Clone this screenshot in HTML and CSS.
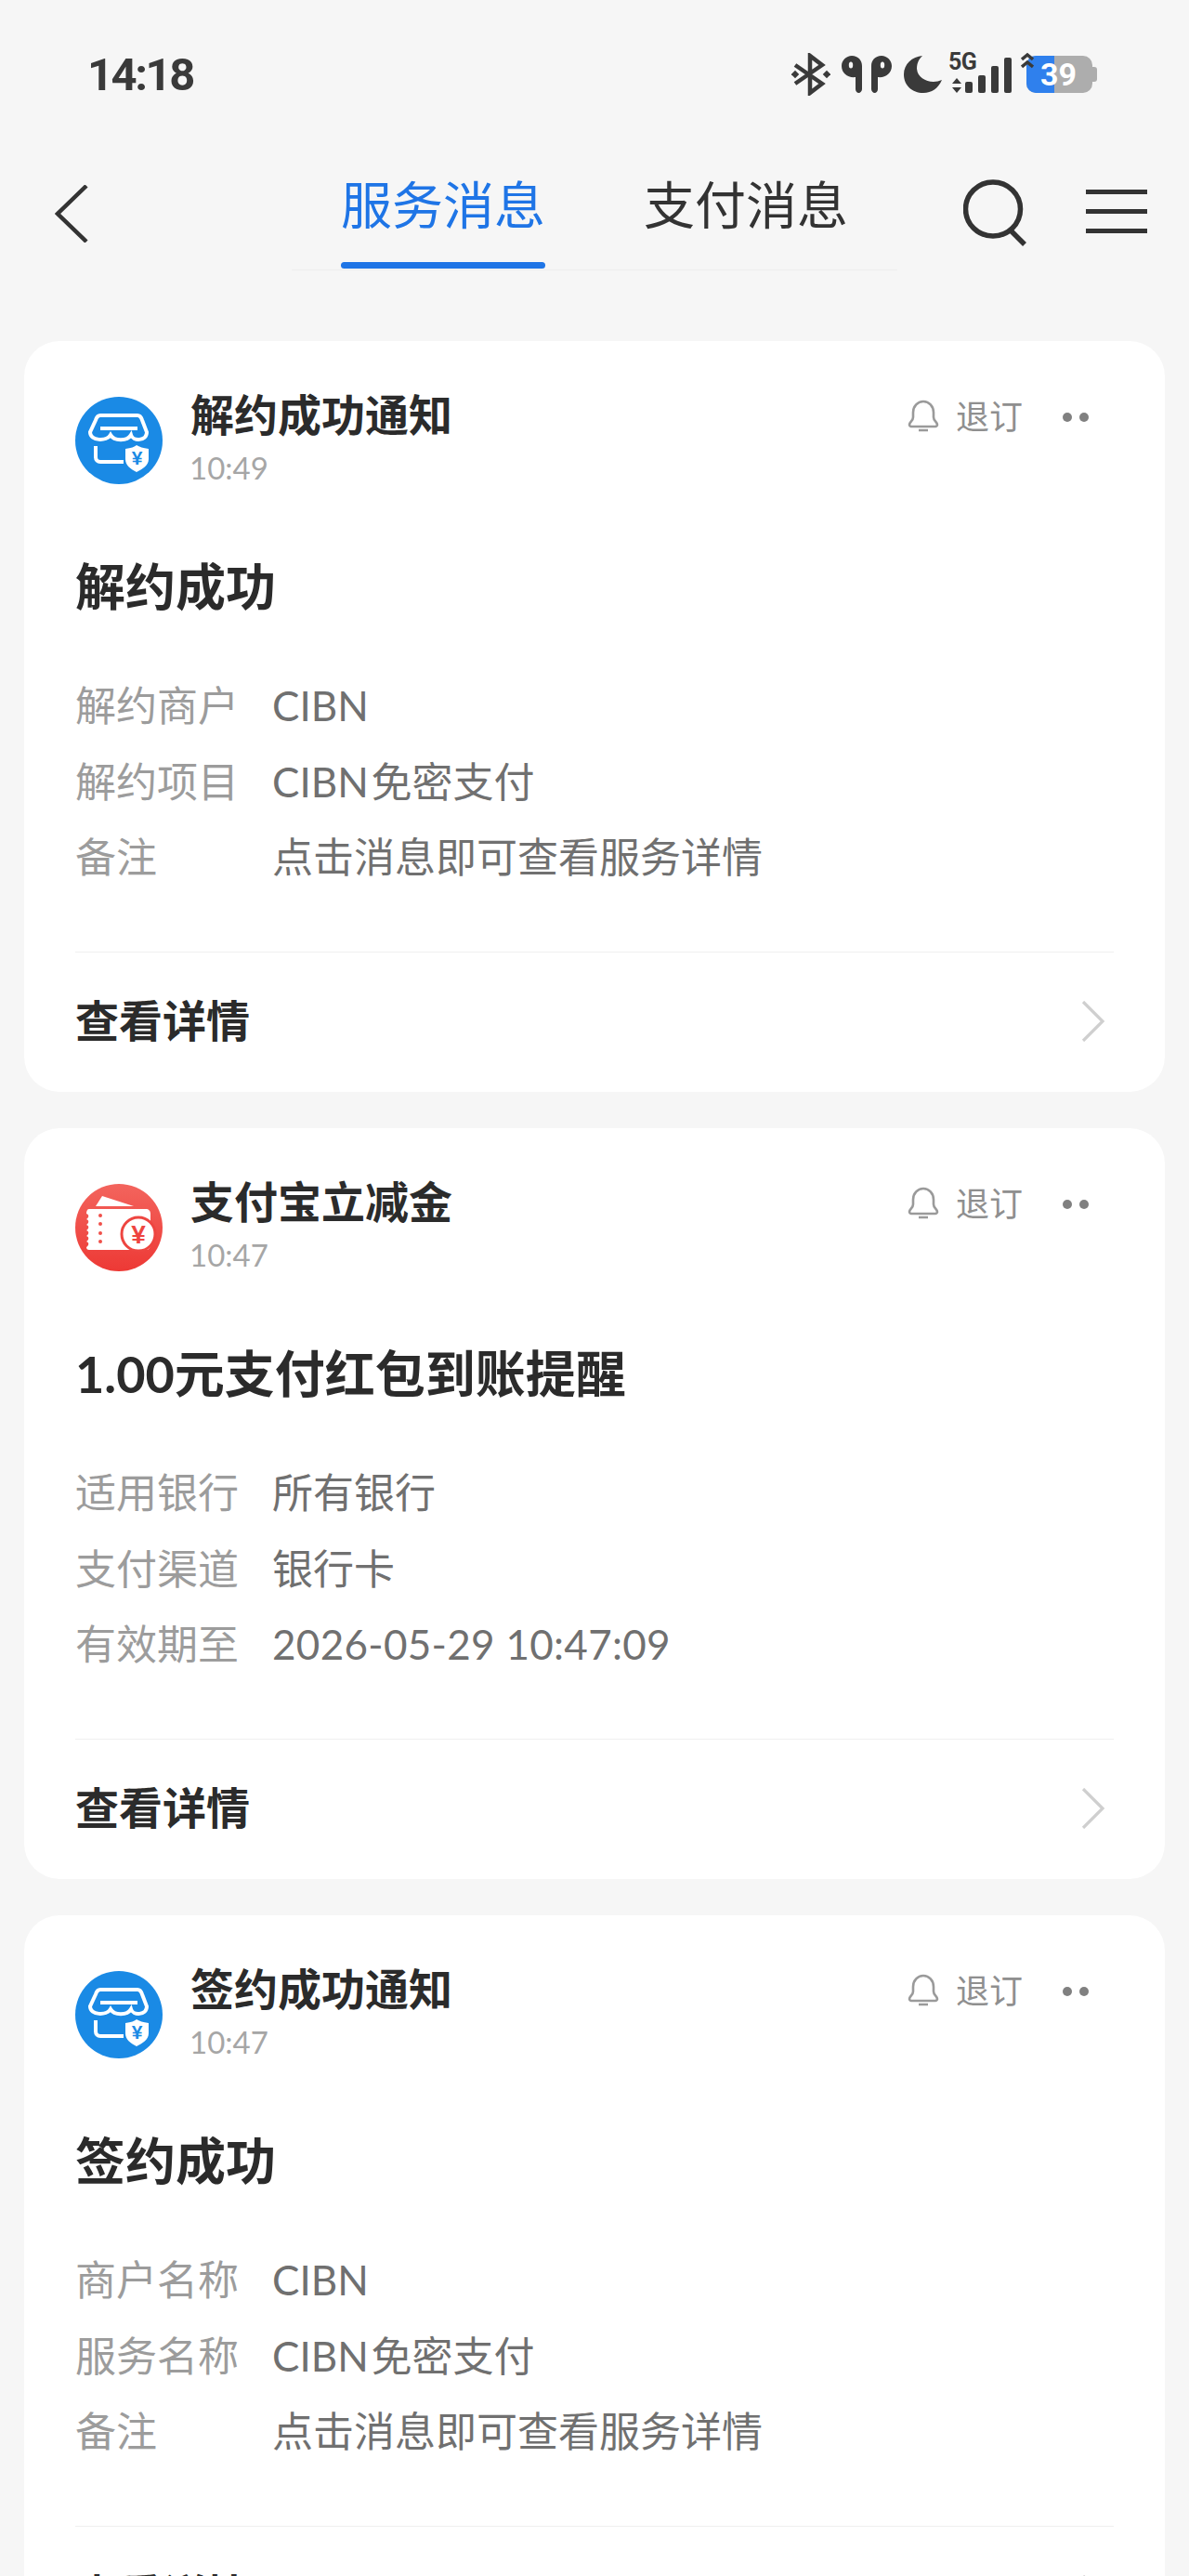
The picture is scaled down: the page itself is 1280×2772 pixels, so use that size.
FILE: index.html
```html
<!DOCTYPE html>
<html lang="zh-CN">
<head>
    <meta charset="UTF-8">
    <meta name="viewport" content="width=device-width, initial-scale=1.0">
    <title>服务消息</title>
    <link rel="stylesheet" href="styles.css">
</head>
<body>

<div class="status-bar">
    <span class="clock">14:18</span>
    <div class="status-icons">
        <svg class="ic-bt" width="42" height="46" viewBox="0 0 42 46">
            <path d="M4 13 L33 33 L20 43 V3 L33 13 L4 33" fill="none" stroke="#3a3a3a" stroke-width="4.5"/>
            <rect x="-3" y="-3" width="6" height="6" transform="translate(4 23) rotate(45)" fill="#3a3a3a"/>
            <rect x="-3" y="-3" width="6" height="6" transform="translate(38 23) rotate(45)" fill="#3a3a3a"/>
        </svg>
        <svg class="ic-pods" width="54" height="40" viewBox="0 0 54 40">
            <path d="M11 0 C18 0 22 5 22 11 V36 C22 38 20 40 18.500 40 C16.500 40 15 38 15 36 V23 C7 24 0 19 0 11 C0 5 5 0 11 0 Z" fill="#3a3a3a"/>
            <ellipse cx="10" cy="10" rx="2.200" ry="3.500" fill="#f6f6f6"/>
            <path d="M43 0 C36 0 32 5 32 11 V36 C32 38 34 40 35.500 40 C37.500 40 39 38 39 36 V23 C47 24 54 19 54 11 C54 5 49 0 43 0 Z" fill="#3a3a3a"/>
            <ellipse cx="44" cy="10" rx="2.200" ry="3.500" fill="#f6f6f6"/>
        </svg>
        <svg class="ic-moon" width="41" height="40" viewBox="0 0 41 40">
            <path d="M20 0 C9 1 0 9 0 20 C0 32 9 40 21 40 C30 40 37 35 41 26 C30 31 15 26 14 14 C14 8 16 4 20 0 Z" fill="#3a3a3a"/>
        </svg>
        <div class="net">
            <div class="net-left">
                <span class="net-5g">5G</span>
                <svg width="10" height="16" viewBox="0 0 10 16"><path d="M5 0 L10 6 H0 Z M5 16 L0 10 H10 Z" fill="#3a3a3a"/></svg>
            </div>
            <div class="bars">
                <i class="bar bar-1"></i><i class="bar bar-2"></i><i class="bar bar-3"></i><i class="bar bar-4"></i>
            </div>
        </div>
        <div class="battery">
            <div class="battery-body"><div class="battery-fill"></div><span class="battery-num">39</span></div>
            <div class="battery-tip"></div>
            <svg class="charge" width="14" height="20" viewBox="0 0 14 20"><path d="M1 8 L7 3 L13 8 M1 16 L7 11 L13 16" fill="none" stroke="#3a3a3a" stroke-width="3.5"/></svg>
        </div>
    </div>
</div>

<div class="nav">
    <svg class="back" width="36" height="62" viewBox="0 0 36 62"><path d="M34 1 L3 31 L34 61" fill="none" stroke="#333" stroke-width="4.5"/></svg>
    <div class="tabs">
        <div class="tab active">服务消息<div class="tab-line"></div></div>
        <div class="tab">支付消息</div>
    </div>
    <svg class="search" width="68" height="72" viewBox="0 0 68 72"><ellipse cx="32" cy="32" rx="29.5" ry="29" fill="none" stroke="#333" stroke-width="5.5"/><path d="M51 55 L66 70" fill="none" stroke="#333" stroke-width="5.5"/></svg>
    <div class="menu"><i></i><i></i><i></i></div>
</div>

<div class="list">

    <div class="card">
        <div class="card-head">
            <svg class="logo" width="94" height="94" viewBox="0 0 94 94">
                <circle cx="47" cy="47" r="47" fill="#1a8ae5"/>
                <path d="M27 20 H67 C70 20 71 22 72 25 L77 38 C77 48 62 48 60 41 C56 48 42 48 38 41 C34 48 16 48 16 38 L22 25 C23 22 24 20 27 20 Z M27 34 H67" fill="none" stroke="#fff" stroke-width="4"/>
                <path d="M22 53 V65 C22 68 24 70 27 70 H52" fill="none" stroke="#fff" stroke-width="4"/>
                <path d="M54 56 C60 55 64 54 66 52 C69 54 73 55 79 56 V67 C79 74 72 78 66 81 C60 78 54 74 54 67 Z" fill="#fff"/>
                <text class="logo-yen" x="66.5" y="73" text-anchor="middle">¥</text>
            </svg>
            <div class="head-text">
                <div class="card-title">解约成功通知</div>
                <div class="card-time">10:49</div>
            </div>
            <div class="card-actions">
                <svg class="bell" width="36" height="36" viewBox="0 0 36 36"><path d="M3 27 C3 24 7 23 7 19 V14 C7 7 12 2 18 2 C24 2 29 7 29 14 V19 C29 23 33 24 33 27 C33 28 32 29 31 29 H5 C4 29 3 28 3 27 Z M13 33 H23" fill="none" stroke="#9a9a9a" stroke-width="2.6"/></svg>
                <span class="unsub">退订</span>
                <div class="dots"><i></i><i></i></div>
            </div>
        </div>
        <div class="card-heading">解约成功</div>
        <div class="rows">
            <div class="row"><span class="row-label">解约商户</span><span class="row-value">CIBN</span></div>
            <div class="row"><span class="row-label">解约项目</span><span class="row-value">CIBN&#8202;免密支付</span></div>
            <div class="row"><span class="row-label">备注</span><span class="row-value">点击消息即可查看服务详情</span></div>
        </div>
        <div class="card-foot">
            <span class="foot-text">查看详情</span>
            <svg class="foot-arrow" width="26" height="44" viewBox="0 0 26 44"><path d="M2 1 L23 22 L2 43" fill="none" stroke="#cfcfcf" stroke-width="3.2"/></svg>
        </div>
    </div>

    <div class="card">
        <div class="card-head">
            <svg class="logo" width="94" height="94" viewBox="0 0 94 94">
                <defs><linearGradient id="redFill" x1="0" y1="0" x2="0" y2="1"><stop offset="0" stop-color="#f3645d"/><stop offset="1" stop-color="#ed3935"/></linearGradient></defs>
                <circle cx="47" cy="47" r="47" fill="url(#redFill)"/>
                <path d="M22 24 L29 13 L63 24 Z" fill="#fff"/>
                <path d="M15 27 H76 C79 27 81 29 81 32 V66 C81 69 79 71 76 71 H15 C13 71 12 70 12 68 C15 66 15 63 12 62 C15 60 15 57 12 56 C15 54 15 51 12 50 C15 48 15 45 12 44 C15 42 15 39 12 38 C15 36 15 33 12 32 C12 29 13 27 15 27 Z" fill="#fff"/>
                <circle cx="27" cy="34" r="2" fill="#f0504a"/><circle cx="27" cy="43" r="2" fill="#f0504a"/><circle cx="27" cy="53" r="2" fill="#f0504a"/><circle cx="27" cy="62" r="2" fill="#f0504a"/>
                <circle cx="68" cy="54" r="18" fill="#fff" stroke="#ee4540" stroke-width="3"/>
                <text class="logo-yen logo-yen-red" x="68" y="64" text-anchor="middle">¥</text>
            </svg>
            <div class="head-text">
                <div class="card-title">支付宝立减金</div>
                <div class="card-time">10:47</div>
            </div>
            <div class="card-actions">
                <svg class="bell" width="36" height="36" viewBox="0 0 36 36"><path d="M3 27 C3 24 7 23 7 19 V14 C7 7 12 2 18 2 C24 2 29 7 29 14 V19 C29 23 33 24 33 27 C33 28 32 29 31 29 H5 C4 29 3 28 3 27 Z M13 33 H23" fill="none" stroke="#9a9a9a" stroke-width="2.6"/></svg>
                <span class="unsub">退订</span>
                <div class="dots"><i></i><i></i></div>
            </div>
        </div>
        <div class="card-heading">1.00元支付红包到账提醒</div>
        <div class="rows">
            <div class="row"><span class="row-label">适用银行</span><span class="row-value">所有银行</span></div>
            <div class="row"><span class="row-label">支付渠道</span><span class="row-value">银行卡</span></div>
            <div class="row"><span class="row-label">有效期至</span><span class="row-value row-date">2026-05-29 10:47:09</span></div>
        </div>
        <div class="card-foot">
            <span class="foot-text">查看详情</span>
            <svg class="foot-arrow" width="26" height="44" viewBox="0 0 26 44"><path d="M2 1 L23 22 L2 43" fill="none" stroke="#cfcfcf" stroke-width="3.2"/></svg>
        </div>
    </div>

    <div class="card">
        <div class="card-head">
            <svg class="logo" width="94" height="94" viewBox="0 0 94 94">
                <circle cx="47" cy="47" r="47" fill="#1a8ae5"/>
                <path d="M27 20 H67 C70 20 71 22 72 25 L77 38 C77 48 62 48 60 41 C56 48 42 48 38 41 C34 48 16 48 16 38 L22 25 C23 22 24 20 27 20 Z M27 34 H67" fill="none" stroke="#fff" stroke-width="4"/>
                <path d="M22 53 V65 C22 68 24 70 27 70 H52" fill="none" stroke="#fff" stroke-width="4"/>
                <path d="M54 56 C60 55 64 54 66 52 C69 54 73 55 79 56 V67 C79 74 72 78 66 81 C60 78 54 74 54 67 Z" fill="#fff"/>
                <text class="logo-yen" x="66.5" y="73" text-anchor="middle">¥</text>
            </svg>
            <div class="head-text">
                <div class="card-title">签约成功通知</div>
                <div class="card-time">10:47</div>
            </div>
            <div class="card-actions">
                <svg class="bell" width="36" height="36" viewBox="0 0 36 36"><path d="M3 27 C3 24 7 23 7 19 V14 C7 7 12 2 18 2 C24 2 29 7 29 14 V19 C29 23 33 24 33 27 C33 28 32 29 31 29 H5 C4 29 3 28 3 27 Z M13 33 H23" fill="none" stroke="#9a9a9a" stroke-width="2.6"/></svg>
                <span class="unsub">退订</span>
                <div class="dots"><i></i><i></i></div>
            </div>
        </div>
        <div class="card-heading">签约成功</div>
        <div class="rows">
            <div class="row"><span class="row-label">商户名称</span><span class="row-value">CIBN</span></div>
            <div class="row"><span class="row-label">服务名称</span><span class="row-value">CIBN&#8202;免密支付</span></div>
            <div class="row"><span class="row-label">备注</span><span class="row-value">点击消息即可查看服务详情</span></div>
        </div>
        <div class="card-foot">
            <span class="foot-text">查看详情</span>
            <svg class="foot-arrow" width="26" height="44" viewBox="0 0 26 44"><path d="M2 1 L23 22 L2 43" fill="none" stroke="#cfcfcf" stroke-width="3.2"/></svg>
        </div>
    </div>

</div>

</body>
</html>
```

FILE: styles.css
```css
html, body {
    height: 2772px;
    overflow: hidden;
}

body {
    margin: 0;
    background-color: #f6f6f6;
    color: #2b2b2b;
    font-family: Lato, "Noto Sans CJK SC", sans-serif;
}

/* Status bar */
.status-bar {
    display: flex;
    align-items: center;
    height: 160px;
    padding: 0 98px 0 94px;
    box-sizing: border-box;
}

.clock {
    font-family: Roboto, sans-serif;
    font-size: 49px;
    font-weight: 700;
    letter-spacing: -2.5px;
    color: #3a3a3a;
}

.status-icons {
    display: flex;
    align-items: flex-start;
    margin-left: auto;
    height: 46px;
}

.ic-pods {
    margin: 3px 0 0 12px;
}

.ic-moon {
    margin: 3px 0 0 13px;
}

.net {
    display: flex;
    align-items: flex-end;
    width: 68px;
    height: 43px;
    margin-left: 7px;
}

.net-left {
    display: flex;
    flex-direction: column;
    width: 32px;
    flex: none;
}

.net-5g {
    font-family: Roboto, sans-serif;
    font-size: 25px;
    font-weight: 700;
    line-height: 20px;
    color: #3a3a3a;
    letter-spacing: -0.5px;
}

.net-left svg {
    margin: 7px 0 0 4px;
}

.bars {
    display: flex;
    align-items: flex-end;
    gap: 6px;
    margin-left: -14px;
}

.bar {
    width: 8px;
    flex: none;
    background: #3a3a3a;
    border-radius: 2px;
}

.bar-1 { height: 12px; }
.bar-2 { height: 19px; }
.bar-3 { height: 29px; }
.bar-4 { height: 38px; }

.battery {
    position: relative;
    display: flex;
    align-items: center;
    width: 83px;
    height: 40px;
    margin: 3px 0 0 10px;
    padding-left: 6px;
    box-sizing: border-box;
}

.charge {
    position: absolute;
    left: 0;
    top: -4px;
}

.battery-body {
    position: relative;
    width: 71px;
    height: 40px;
    border-radius: 10px;
    background: #adadad;
    overflow: hidden;
}

.battery-fill {
    width: 30px;
    height: 40px;
    background: #2f80ed;
}

.battery-num {
    position: absolute;
    left: 15px;
    top: 0;
    font-family: Roboto, sans-serif;
    font-size: 34px;
    font-weight: 700;
    line-height: 40px;
    color: #fff;
}

.battery-tip {
    width: 5px;
    height: 16px;
    background: #adadad;
    border-radius: 0 3px 3px 0;
}

/* Nav */
.nav {
    display: flex;
    align-items: flex-start;
    padding-left: 59px;
    height: 131px;
}

.back {
    margin-top: 39px;
}

.tabs {
    display: flex;
    gap: 106px;
    box-sizing: border-box;
    width: 652px;
    height: 131px;
    margin-left: 219px;
    padding: 22px 0 0 53px;
    border-bottom: 1px solid #eeeeee;
}

.tab {
    width: 220px;
    height: 108px;
    font-size: 55px;
    line-height: 76px;
    text-align: center;
    color: #333;
}

.tab.active {
    color: #1f75e6;
}

.tab-line {
    height: 7px;
    margin-top: 24px;
    border-radius: 4px;
    background: #1f75e6;
}

.search {
    margin: 33px 0 0 71px;
}

.menu {
    display: flex;
    flex-direction: column;
    gap: 16px;
    width: 66px;
    margin: 44px 0 0 64px;
}

.menu i {
    display: block;
    height: 5px;
    background: #333;
}

/* Cards */
.list {
    display: flex;
    flex-direction: column;
    gap: 39px;
    margin: 76px 26px 0;
}

.card {
    flex: none;
    box-sizing: border-box;
    height: 808px;
    padding: 49px 55px 0;
    background: #fff;
    border-radius: 38px;
}

.card-head {
    display: flex;
    align-items: flex-start;
}

.logo {
    margin-top: 11px;
    flex: none;
}

.logo-yen {
    font-family: "Liberation Sans", sans-serif;
    font-size: 21px;
    font-weight: 700;
    fill: #1a8ae5;
}

.logo-yen-red {
    font-size: 28px;
    fill: #ee4540;
}

.head-text {
    margin-left: 30px;
}

.card-title {
    font-size: 47px;
    font-weight: 700;
    line-height: 60px;
}

.card-time {
    margin: 2px 0 0 -1px;
    font-size: 33px;
    line-height: 50px;
    color: #a6a6a6;
}

.card-actions {
    display: flex;
    align-items: center;
    height: 60px;
    margin-left: auto;
    margin-right: 27px;
}

.bell {
    margin-top: 4px;
}

.unsub {
    margin-left: 17px;
    font-size: 36px;
    color: #8f8f8f;
}

.dots {
    display: flex;
    gap: 8px;
    margin: 6px 0 0 43px;
}

.dots i {
    display: block;
    width: 10px;
    height: 10px;
    border-radius: 50%;
    background: #808080;
}

.card-heading {
    margin-top: 69px;
    font-size: 54px;
    font-weight: 700;
    line-height: 70px;
}

.rows {
    margin-top: 52px;
}

.row {
    display: flex;
    height: 81.5px;
    font-size: 44px;
    line-height: 81.5px;
}

.row-label {
    width: 212px;
    flex: none;
    color: #9c9c9c;
}

.row-value {
    color: #707070;
}

.row-date {
    letter-spacing: 0.3px;
}

.card-foot {
    display: flex;
    align-items: center;
    justify-content: space-between;
    height: 150px;
    margin-top: 60px;
    padding: 0 9px 0 0;
    border-top: 1px solid #f0f0f0;
    box-sizing: border-box;
}

.foot-text {
    margin-bottom: 8px;
    font-size: 47px;
    font-weight: 700;
}
```
